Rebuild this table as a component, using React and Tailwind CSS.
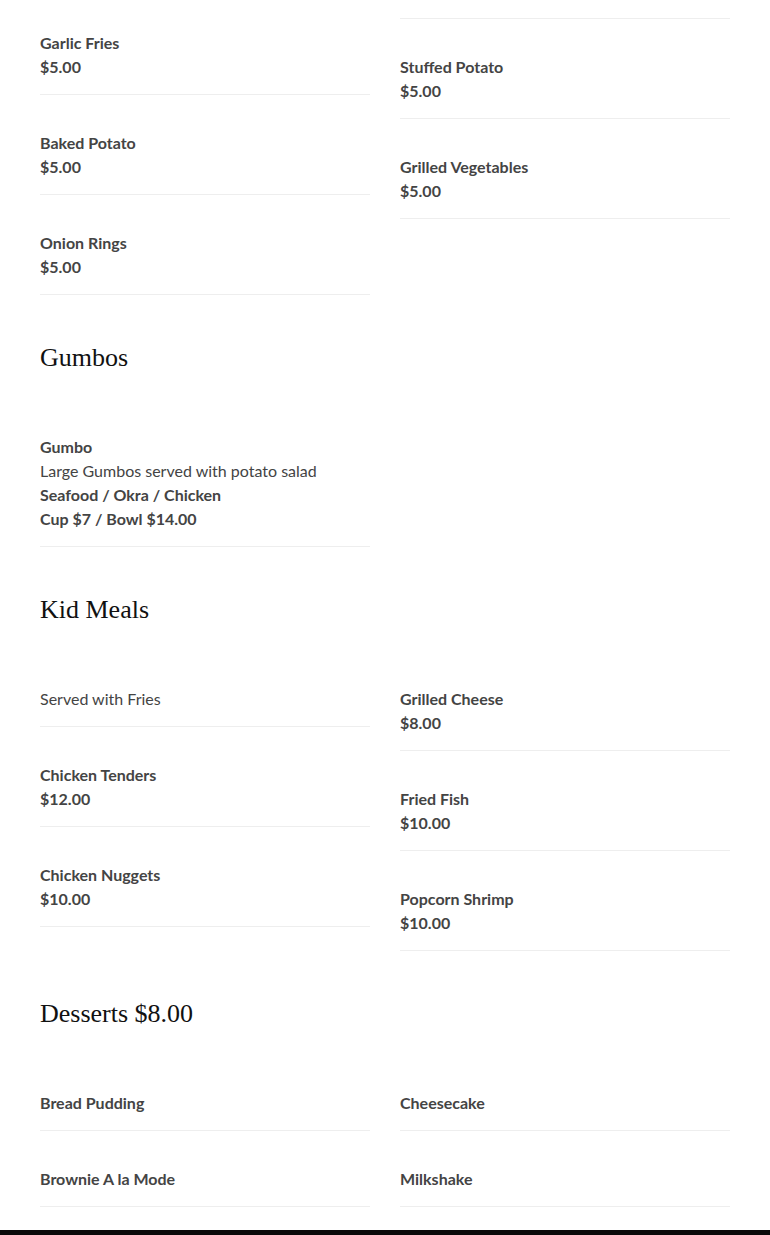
import React from "react";

const sans = { fontFamily: "Lato, 'Liberation Sans', sans-serif" };

function Item({ name, desc, lines = [], price }) {
  return (
    <div className="pt-9 pb-[15px] border-b border-[#eeeeee] text-[16px] leading-[24px] text-[#444444]">
      {name && <div className="font-bold">{name}</div>}
      {desc && <div className="font-normal">{desc}</div>}
      {lines.map((l) => (
        <div key={l} className="font-bold">{l}</div>
      ))}
      {price && <div className="font-bold">{price}</div>}
    </div>
  );
}

function Section({ title, left, right }) {
  return (
    <section>
      {title && (
        <h2
          className="pt-[45px] mb-[23px] text-[26px] leading-[36px] text-[#111111]"
          style={{ fontFamily: "'Liberation Serif', serif" }}
        >
          {title}
        </h2>
      )}
      <div className="grid grid-cols-2 gap-x-[30px] items-start">
        <div className="flex flex-col">
          {left.map((it, i) => (
            <Item key={i} {...it} />
          ))}
        </div>
        <div className="flex flex-col">
          {right.map((it, i) => (
            <Item key={i} {...it} />
          ))}
        </div>
      </div>
    </section>
  );
}

export default function App() {
  return (
    <div className="bg-white overflow-hidden" style={sans}>
      <div className="px-10 -mt-[105px]">
        <Section
          left={[
            { name: "Cajun Fries", price: "$5.00" },
            { name: "Garlic Fries", price: "$5.00" },
            { name: "Baked Potato", price: "$5.00" },
            { name: "Onion Rings", price: "$5.00" },
          ]}
          right={[
            { name: "Sweet Potato Fries", desc: "Seasoned", price: "$5.00" },
            { name: "Stuffed Potato", price: "$5.00" },
            { name: "Grilled Vegetables", price: "$5.00" },
          ]}
        />
        <Section
          title="Gumbos"
          left={[
            {
              name: "Gumbo",
              desc: "Large Gumbos served with potato salad",
              lines: ["Seafood / Okra / Chicken", "Cup $7 / Bowl $14.00"],
            },
          ]}
          right={[]}
        />
        <Section
          title="Kid Meals"
          left={[
            { desc: "Served with Fries" },
            { name: "Chicken Tenders", price: "$12.00" },
            { name: "Chicken Nuggets", price: "$10.00" },
          ]}
          right={[
            { name: "Grilled Cheese", price: "$8.00" },
            { name: "Fried Fish", price: "$10.00" },
            { name: "Popcorn Shrimp", price: "$10.00" },
          ]}
        />
        <Section
          title="Desserts $8.00"
          left={[{ name: "Bread Pudding" }, { name: "Brownie A la Mode" }]}
          right={[{ name: "Cheesecake" }, { name: "Milkshake" }]}
        />
      </div>
      <div className="mt-[23px] h-[200px] bg-[#0a0a0a]" />
    </div>
  );
}
